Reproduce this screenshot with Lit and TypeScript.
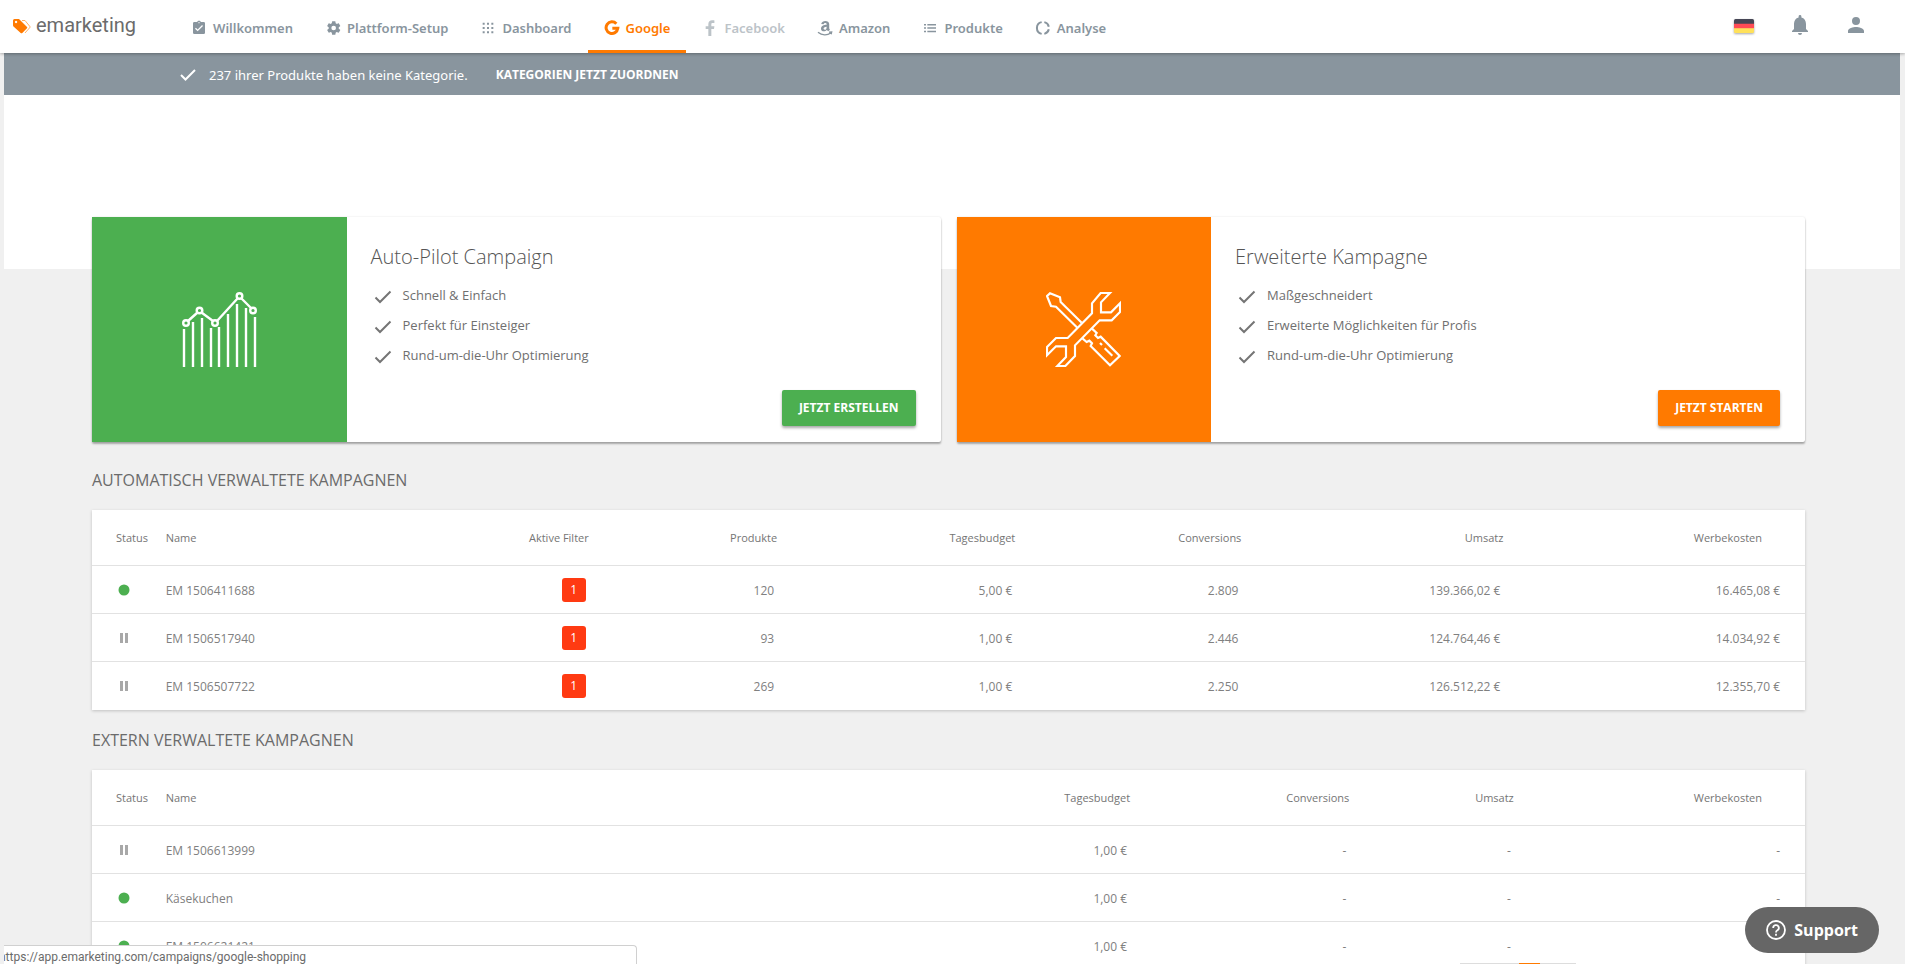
import { LitElement, html, css, svg, nothing } from "lit";
import { customElement, property } from "lit/decorators.js";
import { classMap } from "lit/directives/class-map.js";

const navIcons: Record<string, unknown> = {
  welcome: svg`<path d="M19 3h-4.200C14.400 1.800 13.300 1 12 1s-2.400.800-2.800 2H5a2 2 0 0 0-2 2v14a2 2 0 0 0 2 2h14a2 2 0 0 0 2-2V5a2 2 0 0 0-2-2zm-7 0a1 1 0 1 1 0 2 1 1 0 0 1 0-2zm-2 14-4-4 1.400-1.400L10 14.200l6.600-6.600L18 9z"/>`,
  setup: svg`<path d="M20.600 13c0-.300.100-.700.100-1s0-.700-.100-1l2.100-1.700c.200-.100.200-.400.100-.600l-2-3.500c-.100-.200-.400-.300-.600-.200l-2.500 1a7 7 0 0 0-1.700-1l-.400-2.600a.5.5 0 0 0-.5-.400h-4a.5.5 0 0 0-.5.400l-.4 2.600a7 7 0 0 0-1.700 1l-2.500-1c-.2-.1-.5 0-.6.2l-2 3.500c-.1.200-.1.500.1.600L5.600 11c0 .3-.1.700-.1 1s0 .7.1 1l-2.100 1.700c-.2.100-.2.400-.1.600l2 3.500c.1.200.4.300.6.200l2.500-1a7 7 0 0 0 1.700 1l.4 2.600c0 .2.200.4.500.4h4c.2 0 .5-.2.500-.4l.4-2.600a7 7 0 0 0 1.700-1l2.500 1c.2.100.5 0 .6-.2l2-3.500c.1-.2.1-.5-.1-.6zM13 15.500a3.500 3.500 0 1 1 0-7 3.500 3.500 0 0 1 0 7z"/>`,
  dashboard: svg`<path d="M4 4h3v3H4zm6.500 0h3v3h-3zM17 4h3v3h-3zM4 10.500h3v3H4zm6.500 0h3v3h-3zm6.500 0h3v3h-3zM4 17h3v3H4zm6.500 0h3v3h-3zm6.500 0h3v3h-3z"/>`,
  google: svg`<path fill="none" stroke="currentColor" stroke-width="4.500" d="M18.500 5.500A8.800 8.800 0 1 0 20.700 12.500H12.500"/>`,
  facebook: svg`<path d="M14 24V13.500h4l.6-4.300H14V6.700c0-1.300.4-2.100 2.200-2.100h2.400V.700C18.200.600 16.800.500 15.200.500c-3.400 0-5.700 2-5.700 5.700v3h-4v4.300h4V24z"/>`,
  amazon: svg`<path d="M14.500 7c-4.500.2-8.500 1.500-8.500 6 0 4.600 6 5.300 8.800 2l2 2 2.700-2.500c-1-.9-1.200-1.500-1.200-2.800V6c0-6-11-6.300-12 0l3.700.4c.4-2.700 4.500-2.700 4.500 0zm0 3c0 3-.8 4.700-2.700 4.700-3 0-2.800-4.900 2.700-4.700z"/><path fill="none" stroke="currentColor" stroke-width="2" d="M1.500 18.500c6 5 14 5 19 1M18 18.200l4-.3-.8 3.500"/>`,
  products: svg`<path d="M3 6h3v2.200H3zm5 0h13v2.200H8zM3 11h3v2.200H3zm5 0h13v2.200H8zM3 16h3v2.200H3zm5 0h13v2.200H8z"/>`,
  analysis: svg`<path fill="none" stroke="currentColor" stroke-width="3" d="M14 3.200a9 9 0 0 1 6.700 6.800M20.700 14a9 9 0 0 1-6.700 6.800M10 20.800a9 9 0 0 1 0-17.600"/>`,
};

const nav = [
  { icon: "welcome", label: "Willkommen" },
  { icon: "setup", label: "Plattform-Setup" },
  { icon: "dashboard", label: "Dashboard" },
  { icon: "google", label: "Google", active: true },
  { icon: "facebook", label: "Facebook", muted: true },
  { icon: "amazon", label: "Amazon" },
  { icon: "products", label: "Produkte" },
  { icon: "analysis", label: "Analyse" },
];

const checkIcon = html`<svg class="check" viewBox="0 0 18 14" width="18" height="14" aria-hidden="true">
  <path fill="none" stroke="currentColor" stroke-width="2" d="M1.500 7.500 6 12 16.500 1.500" />
</svg>`;

const bars = [[2, 37], [11, 30], [20, 26], [29, 36], [37, 35], [46, 22], [55, 12], [64, 16], [73, 25]];
const nodes = [[4, 31], [17.5, 18.5], [33, 31], [57.5, 4], [71, 18.5]];

const chartArt = html`<svg viewBox="0 0 75 75" width="75" height="75" aria-hidden="true">
  <g fill="none" stroke="#fff" stroke-width="2.400">
    ${bars.map(([x, y]) => svg`<path d="M${x} ${y}V75" />`)}
    <path d="M6 29 15.500 20.500M19.500 20.500 31 29M35 29 55.500 6.500M59.500 6.500 69.500 16.500" />
    ${nodes.map(([x, y]) => svg`<circle cx=${x} cy=${y} r="2.800" />`)}
  </g>
</svg>`;

const toolsArt = html`<svg viewBox="138 338 225 225" width="75" height="75" aria-hidden="true">
  <g fill="none" stroke="#fff" stroke-width="6.500">
    <path d="M330 341H302L276 372V402L203 476H168L141 503V528L168 501H198V533L172 560H196L225 530V498L299 423H335L360 398V372L333 399H303V369Z" />
    <path d="M245 430 182 368 180 354 150 342 141 350 153 380 168 382 232 445" />
    <path d="M276 448 290 461 286 468 294 476 302 472 359 530 330 558 272 500 276 492 268 484 260 488 248 478M300 491 306 497M314 507 337 529" />
  </g>
</svg>`;

@customElement("campaign-card")
class CampaignCard extends LitElement {
  @property() heading = "";
  @property() action = "";
  @property() tone = "green";
  @property({ attribute: false }) points: string[] = [];

  static styles = css`
    :host { display: flex; min-height: 225px; background: #fff; border-radius: 2px;
      box-shadow: 0 2px 2px rgba(0, 0, 0, 0.3), 0 0 2px rgba(0, 0, 0, 0.12); }
    .art { flex: 0 0 30%; display: grid; place-items: center; background: #4caf50; }
    .art.orange { background: #ff7a00; }
    .body { flex: 1; display: flex; flex-direction: column; padding: 26px 25px 16px 24px; }
    h2 { margin: 0 0 9px; font-size: 20px; line-height: 28px; font-weight: 300; color: #555; }
    ul { margin: 0; padding: 0 0 0 3px; list-style: none; }
    li { display: flex; align-items: center; gap: 11px; font-size: 13px; line-height: 30px; font-weight: 500; color: #6f6f6f; }
    .check { margin-top: 3px; color: #757575; }
    button { align-self: flex-end; margin-top: auto; height: 36px; padding: 0 17px; border: 0; border-radius: 2px;
      font: 700 12px/36px "Open Sans", sans-serif; color: #fff; background: #4caf50; box-shadow: 0 2px 3px rgba(0, 0, 0, 0.35); }
    button.orange { background: #ff7a00; }
  `;

  render() {
    const orange = this.tone === "orange";
    return html`
      <div class=${classMap({ art: true, orange })}>${orange ? toolsArt : chartArt}</div>
      <div class="body">
        <h2>${this.heading}</h2>
        <ul>${this.points.map((p) => html`<li>${checkIcon}<span>${p}</span></li>`)}</ul>
        <button class=${classMap({ orange })}>${this.action}</button>
      </div>`;
  }
}

type Row = { active: boolean; cells: string[] };

@customElement("campaign-table")
class CampaignTable extends LitElement {
  @property({ attribute: false }) columns: string[] = [];
  @property({ attribute: false }) widths: number[] = [];
  @property({ attribute: false }) rows: Row[] = [];

  static styles = css`
    :host { display: block; background: #fff; box-shadow: 0 1px 3px rgba(0, 0, 0, 0.2); }
    table { width: 100%; table-layout: fixed; border-collapse: separate; border-spacing: 0; }
    th, td { box-sizing: border-box; padding: 0; text-align: right; border-bottom: 1px solid #e2e2e2; white-space: nowrap; }
    th { height: 56px; font-size: 11px; font-weight: 400; color: #757575; }
    td { height: 48px; padding: 2px 3px 0 0; font-size: 12px; color: #808080; }
    tbody tr:last-child td { border-bottom-color: transparent; }
    th:first-child, td:first-child { text-align: left; padding: 0 0 0 24px; }
    th:nth-child(2), td:nth-child(2) { text-align: left; }
    td.filter { padding-top: 0; }
    th:last-child { padding-right: 43px; }
    td:last-child { padding-right: 25px; }
    svg { display: block; margin-left: 2px; }
    .badge { display: inline-block; width: 24px; border-radius: 3px; line-height: 24px; text-align: center; color: #fff; background: #ff3a12; vertical-align: middle; }
  `;

  render() {
    return html`<table>
      <colgroup>${this.widths.map((w) => html`<col style="width:${w}%" />`)}</colgroup>
      <thead><tr>${this.columns.map((c) => html`<th scope="col">${c}</th>`)}</tr></thead>
      <tbody>
        ${this.rows.map((r) => html`<tr>
          <td>${r.active
            ? html`<svg width="12" height="12" role="img" aria-label="Aktiv"><circle cx="6" cy="6" r="5.500" fill="#4caf50" /></svg>`
            : html`<svg width="12" height="12" role="img" aria-label="Pausiert"><path d="M2 1h3v10H2zM7 1h3v10H7z" fill="#a8a8a8" /></svg>`}</td>
          ${r.cells.map((c, i) => this.columns[i + 1] === "Aktive Filter"
            ? html`<td class="filter"><span class="badge">${c}</span></td>`
            : html`<td>${c}</td>`)}
        </tr>`)}
      </tbody>
    </table>`;
  }
}

@customElement("app-root")
class AppRoot extends LitElement {
  static styles = css`
    :host { display: flex; flex-direction: column; position: relative; height: 100vh; overflow: hidden; background: #f0f0f0;
      font-family: "Open Sans", "Noto Sans", sans-serif; color: #757575; }
    header { position: relative; z-index: 1; flex: none; display: flex; height: 53px; background: #fff; box-shadow: 0 1px 3px rgba(0, 0, 0, 0.3); }
    .brand { display: flex; align-items: center; gap: 5px; width: 162px; padding: 0 0 4px 13px; text-decoration: none;
      font: 400 20px/24px Roboto, sans-serif; color: #6b6b6b; }
    .brand svg { margin-top: 4px; }
    nav { display: flex; flex: 1; font-family: "Noto Sans", sans-serif; }
    nav a { display: flex; align-items: center; gap: 6px; padding: 5px 16px 0; border-bottom: 3px solid transparent; text-decoration: none;
      font-size: 13px; font-weight: 600; color: #89959e; }
    nav a.active { color: #ff7a00; border-bottom-color: #ff7a00; }
    nav a.muted { color: #bcc3c8; }
    .tools { display: flex; align-items: center; gap: 36px; padding: 0 39px 4px 0; }
    .tools button { display: grid; place-items: center; width: 20px; height: 24px; padding: 0; border: 0; background: none; color: #89959e; }
    .flag { margin-top: 3px; filter: drop-shadow(0 1px 1px rgba(0, 0, 0, 0.35)); }
    main { flex: 1; min-height: 0; margin: 0 5px 0 4px; overflow: hidden; }
    .notice { display: flex; align-items: center; height: 42px; padding: 1px 0 0 176px; box-sizing: border-box; background: #89959e; color: #fff;
      font-family: "Noto Sans", sans-serif; font-size: 13px; }
    .notice span { margin: 0 28px 0 13px; }
    .notice a { color: #fff; font: 700 12px/20px "Open Sans", sans-serif; text-decoration: none; }
    .hero { height: 174px; background: #fff; }
    .content { margin: -52px 95px 0 88px; }
    .cards { display: grid; grid-template-columns: 1fr 1fr; gap: 16px; margin-bottom: 26px; }
    h1 { margin: 18px 0; font-size: 16px; line-height: 24px; font-weight: 500; color: #6b6b6b; }
    .support { position: absolute; right: 26px; bottom: 11px; z-index: 2; display: flex; align-items: center; gap: 8px; height: 46px; padding: 0 21px;
      border: 0; border-radius: 23px; background: #666; color: #fff; font: 700 16px/24px "Open Sans", sans-serif; }
    .url { position: absolute; left: 4px; bottom: 0; box-sizing: border-box; width: 633px; max-width: 50%; height: 19px; overflow: hidden;
      border: 1px solid #d0d0d0; border-width: 1px 1px 0 0; border-radius: 0 4px 0 0; background: #fff;
      font: 400 12px/22px Roboto, sans-serif; text-indent: -5px; color: #6b6b6b; }
    .sheet { position: absolute; right: 329px; bottom: 0; width: 116px; height: 1px; background: linear-gradient(90deg, #ddd 51%, #ff7a00 51% 69%, #ddd 69%); }
  `;

  render() {
    return html`
      <header>
        <a class="brand" href="#">
          <svg width="18" height="15" viewBox="0 0 18 15" aria-hidden="true">
            <path fill="none" stroke="#ffb066" d="M9 1.500 12 1.500 17.300 8 12 14" />
            <path fill="#ff7a00" d="M0 1.500Q0 0 1.500 0H6L14 8Q14.600 8.600 14 9.300L9.300 14Q8.500 14.700 7.700 14L.5 7.500Q0 7 0 6.300ZM3 1.800A1.200 1.200 0 1 0 3.100 1.800Z" />
          </svg>
          <span>emarketing</span>
        </a>
        <nav>
          ${nav.map((n) => html`<a href="#" class=${classMap({ active: !!n.active, muted: !!n.muted })} aria-current=${n.active ? "page" : nothing}>
            <svg width="16" height="16" viewBox="0 0 24 24" fill="currentColor" aria-hidden="true">${navIcons[n.icon]}</svg><span>${n.label}</span>
          </a>`)}
        </nav>
        <div class="tools">
          <button aria-label="Sprache"><svg class="flag" width="20" height="14" viewBox="0 0 20 14"><clipPath id="r"><rect width="20" height="14" rx="1.500" /></clipPath><g clip-path="url(#r)"><path fill="#464655" d="M0 0h20v5H0z" /><path fill="#ff4b55" d="M0 4.700h20v5H0z" /><path fill="#ffe15a" d="M0 9.300h20V14H0z" /></g></svg></button>
          <button aria-label="Benachrichtigungen"><svg width="16" height="20" viewBox="0 0 16 20" fill="currentColor"><path d="M8 20a2 2 0 0 0 2-2H6a2 2 0 0 0 2 2zM14 14V9c0-3.200-1.700-5.700-4.600-6.400V1.500a1.400 1.400 0 0 0-2.800 0v1.100C3.700 3.300 2 5.800 2 9v5l-2 2v1h16v-1z" /></svg></button>
          <button aria-label="Profil"><svg width="16" height="16" viewBox="0 0 16 16" fill="currentColor"><path d="M8 8a4 4 0 1 0 0-8 4 4 0 0 0 0 8zm0 2c-2.700 0-8 1.300-8 4v2h16v-2c0-2.700-5.300-4-8-4z" /></svg></button>
        </div>
      </header>
      <main>
        <div class="notice">
          <svg width="16" height="12" viewBox="0 0 16 12" aria-hidden="true"><path fill="none" stroke="#fff" stroke-width="2" d="M1 6 5.500 10.500 15 1" /></svg>
          <span>237 ihrer Produkte haben keine Kategorie.</span>
          <a href="#">KATEGORIEN JETZT ZUORDNEN</a>
        </div>
        <div class="hero"></div>
        <div class="content">
          <div class="cards">
            <campaign-card heading="Auto-Pilot Campaign" action="JETZT ERSTELLEN" .points=${["Schnell & Einfach", "Perfekt für Einsteiger", "Rund-um-die-Uhr Optimierung"]}></campaign-card>
            <campaign-card tone="orange" heading="Erweiterte Kampagne" action="JETZT STARTEN" .points=${["Maßgeschneidert", "Erweiterte Möglichkeiten für Profis", "Rund-um-die-Uhr Optimierung"]}></campaign-card>
          </div>
          <h1>AUTOMATISCH VERWALTETE KAMPAGNEN</h1>
          <campaign-table
            .columns=${["Status", "Name", "Aktive Filter", "Produkte", "Tagesbudget", "Conversions", "Umsatz", "Werbekosten"]}
            .widths=${[4.3, 12.4, 12.3, 11, 13.9, 13.2, 15.3, 17.6]}
            .rows=${[
              { active: true, cells: ["EM 1506411688", "1", "120", "5,00 €", "2.809", "139.366,02 €", "16.465,08 €"] },
              { active: false, cells: ["EM 1506517940", "1", "93", "1,00 €", "2.446", "124.764,46 €", "14.034,92 €"] },
              { active: false, cells: ["EM 1506507722", "1", "269", "1,00 €", "2.250", "126.512,22 €", "12.355,70 €"] },
            ]}></campaign-table>
          <h1>EXTERN VERWALTETE KAMPAGNEN</h1>
          <campaign-table
            .columns=${["Status", "Name", "Tagesbudget", "Conversions", "Umsatz", "Werbekosten"]}
            .widths=${[4.3, 28, 28.3, 12.8, 9.6, 17]}
            .rows=${[
              { active: false, cells: ["EM 1506613999", "1,00 €", "-", "-", "-"] },
              { active: true, cells: ["Käsekuchen", "1,00 €", "-", "-", "-"] },
              { active: true, cells: ["EM 1506621421", "1,00 €", "-", "-", "-"] },
            ]}></campaign-table>
        </div>
      </main>
      <div class="sheet"></div>
      <div class="url">https://app.emarketing.com/campaigns/google-shopping</div>
      <button class="support">
        <svg width="20" height="20" viewBox="0 0 20 20" fill="none" stroke="#fff" stroke-width="1.800" aria-hidden="true">
          <circle cx="10" cy="10" r="9" /><path d="M7.200 8a2.800 2.800 0 1 1 4.200 2.300c-.9.500-1.400 1-1.400 2.200M10 13.800v1.900" />
        </svg>
        <span>Support</span>
      </button>`;
  }
}
